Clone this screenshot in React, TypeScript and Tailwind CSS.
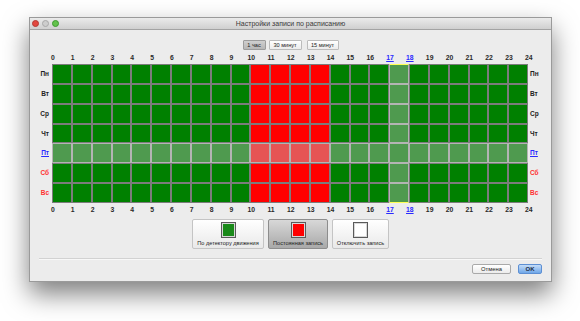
import React from 'react';

const DAYS = ['Пн', 'Вт', 'Ср', 'Чт', 'Пт', 'Сб', 'Вс'];
const HOURS = Array.from({ length: 25 }, (_, i) => i);
const ACTIVE_DAY = 4;
const ACTIVE_HOUR = 17;

const dayColor = (i: number) =>
  i === ACTIVE_DAY ? 'text-[#2a2aff] underline' : i >= 5 ? 'text-[#ff3030]' : 'text-[#222]';

const HourLabels: React.FC = () => (
  <div className="flex ml-[13px] h-[10px] items-center">
    {HOURS.map((h) => (
      <span
        key={h}
        className={`w-[19.83px] text-center text-[6.8px] font-bold leading-none ${
          h === ACTIVE_HOUR || h === ACTIVE_HOUR + 1 ? 'text-[#2a2aff] underline' : 'text-[#2a2a2a]'
        }`}
      >
        {h}
      </span>
    ))}
  </div>
);

const Cell: React.FC<{ day: number; hour: number }> = ({ day, hour }) => {
  const red = hour >= 10 && hour <= 13;
  const lit = day === ACTIVE_DAY || hour === ACTIVE_HOUR;
  const bg = red ? (lit ? 'bg-[#e65454]' : 'bg-[#ff0000]') : lit ? 'bg-[#4f9a4f]' : 'bg-[#008000]';
  const border = lit ? 'border-[#b4b4b4]' : 'border-[#7c7c7c]';
  const top = hour === ACTIVE_HOUR && day === 0 ? 'border-t-[#ffff55]' : '';
  const bottom = hour === ACTIVE_HOUR && day === 6 ? 'border-b-[#ffff55]' : '';
  return <div className={`border ${border} ${top} ${bottom} ${bg}`} />;
};

const LegendButton: React.FC<{ label: string; swatch: string; width: string; pressed?: boolean }> = ({
  label,
  swatch,
  width,
  pressed,
}) => (
  <div
    className={`${width} h-[30px] flex flex-col items-center border rounded-[2px] ${
      pressed
        ? 'border-[#8d8d8d] bg-gradient-to-b from-[#d8d8d8] to-[#a9a9a9]'
        : 'border-[#c4c4c4] bg-gradient-to-b from-[#ffffff] to-[#e9e9e9]'
    }`}
  >
    <div className="mt-[2px] w-[15px] h-[16px] border border-[#5a5a5a] p-[1px] bg-[#d8d8d8]">
      <div className={`w-full h-full ${swatch}`} />
    </div>
    <span className="mt-[3px] text-[5.6px] leading-none text-[#222] whitespace-nowrap">{label}</span>
  </div>
);

export default function App() {
  return (
    <div
      className="w-[580px] h-[321px] bg-white pl-[29px] pt-[17px]"
      style={{ fontFamily: '"Liberation Sans", "DejaVu Sans", sans-serif' }}
    >
      <div className="w-[523px] h-[265px] flex flex-col bg-[#ececec] border border-[#9a9a9a] shadow-[0_12px_24px_rgba(0,0,0,0.5)]">
        {/* title bar */}
        <div className="relative h-[12px] flex items-center justify-center bg-gradient-to-b from-[#ebebeb] to-[#cfcfcf] border-b border-[#a3a3a3]">
          <div className="absolute left-[2px] top-[2px] flex gap-[3px]">
            <span className="w-[7px] h-[7px] rounded-full bg-[#e2473f] border border-[#b33a33]" />
            <span className="w-[7px] h-[7px] rounded-full bg-[#cdcdcd] border border-[#a8a8a8]" />
            <span className="w-[7px] h-[7px] rounded-full bg-[#62c24b] border border-[#3d9a2f]" />
          </div>
          <span className="text-[7px] text-[#3a3a3a] leading-none">Настройки записи по расписанию</span>
        </div>

        {/* resolution buttons */}
        <div className="mt-[10px] flex justify-center gap-[3px]">
          <div className="w-[23px] h-[10px] flex items-center justify-center text-[5.6px] text-[#222] border border-[#9c9c9c] bg-gradient-to-b from-[#cfcfcf] to-[#b6b6b6] rounded-[1px]">
            1 час
          </div>
          <div className="w-[33px] h-[10px] flex items-center justify-center text-[5.6px] text-[#222] border border-[#bcbcbc] bg-gradient-to-b from-[#ffffff] to-[#ececec] rounded-[1px]">
            30 минут
          </div>
          <div className="ml-[2px] w-[32px] h-[10px] flex items-center justify-center text-[5.6px] text-[#222] border border-[#bcbcbc] bg-gradient-to-b from-[#ffffff] to-[#ececec] rounded-[1px]">
            15 минут
          </div>
        </div>

        {/* schedule */}
        <div className="mt-[3px]">
          <HourLabels />
          <div className="mt-[1px] flex">
            <div className="w-[22px] flex flex-col">
              {DAYS.map((d, i) => (
                <span
                  key={d}
                  className={`h-[19.86px] flex items-center justify-end pr-[3px] text-[6.5px] font-bold ${dayColor(i)}`}
                >
                  {d}
                </span>
              ))}
            </div>
            <div className="w-[476px] h-[139px] grid grid-cols-[repeat(24,minmax(0,1fr))] grid-rows-[repeat(7,minmax(0,1fr))]">
              {DAYS.map((_, d) => HOURS.slice(0, 24).map((h) => <Cell key={`${d}-${h}`} day={d} hour={h} />))}
            </div>
            <div className="flex flex-col">
              {DAYS.map((d, i) => (
                <span
                  key={d}
                  className={`h-[19.86px] flex items-center pl-[2px] text-[6.5px] font-bold ${dayColor(i)}`}
                >
                  {d}
                </span>
              ))}
            </div>
          </div>
          <div className="mt-[2px]">
            <HourLabels />
          </div>
        </div>

        {/* legend */}
        <div className="mt-[4px] flex justify-center gap-[4px]">
          <LegendButton label="По детектору движения" swatch="bg-[#1a8a1a]" width="w-[72px]" />
          <LegendButton label="Постоянная запись" swatch="bg-[#ff0000]" width="w-[60px]" pressed />
          <LegendButton label="Отключить запись" swatch="bg-white" width="w-[57px]" />
        </div>

        <div className="mt-[9px] mx-[9px] border-t border-[#d2d2d2] border-b border-b-[#f8f8f8]" />

        {/* dialog buttons */}
        <div className="mt-[4px] flex justify-end gap-[7px] pr-[9px]">
          <div className="w-[39px] h-[10px] flex items-center justify-center text-[5.8px] text-[#222] rounded-[2px] border border-[#a9a9a9] bg-gradient-to-b from-[#ffffff] to-[#ececec]">
            Отмена
          </div>
          <div className="w-[24px] h-[10px] flex items-center justify-center text-[6px] font-bold text-[#1d2c44] rounded-[2px] border border-[#5d8fd3] bg-gradient-to-b from-[#c4dcf7] to-[#6fa7e8]">
            OK
          </div>
        </div>
      </div>
    </div>
  );
}
